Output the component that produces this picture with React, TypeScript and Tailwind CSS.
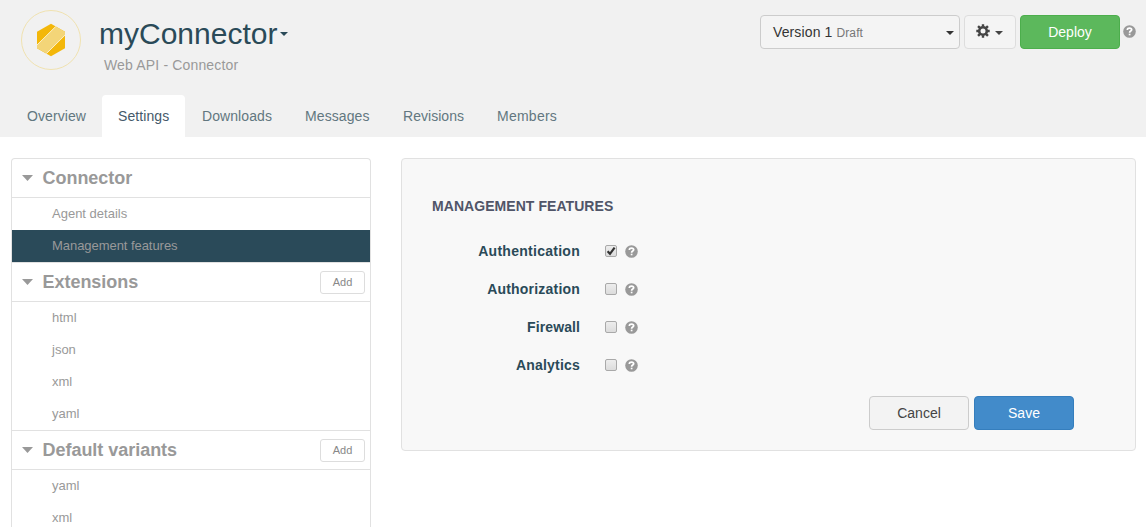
import React from "react";

function Caret({ className }: { className: string }) {
  return (
    <svg viewBox="0 0 8 4" preserveAspectRatio="none" className={className} fill="currentColor" aria-hidden="true">
      <path d="M0 0h8L4 4z" />
    </svg>
  );
}

function Help() {
  return (
    <svg viewBox="0 0 12 12" className="size-[13px] shrink-0" aria-hidden="true">
      <circle cx="6" cy="6" r="5.8" fill="#999" />
      <path d="M4 4.7C4 3.3 4.8 2.8 6 2.8s2 .65 2 1.6C8 5.6 6.1 5.6 6.1 7.1" fill="none" stroke="#fff" strokeWidth="1.6" />
      <path d="M5.3 8h1.6v1.5H5.3z" fill="#fff" />
    </svg>
  );
}

function Gear() {
  return (
    <svg viewBox="0 0 14 14" className="size-3.5" fill="none" stroke="#444" aria-hidden="true">
      <circle cx="7" cy="7" r="3.8" strokeWidth="2.6" />
      <path
        d="M7 .3v2.3M7 11.4v2.3M.3 7h2.3M11.4 7h2.3M2.05 2.05l1.8 1.8M10.15 10.15l1.8 1.8M2.05 11.95l1.8-1.8M10.15 3.85l1.8-1.8"
        strokeWidth="2.4"
      />
    </svg>
  );
}

function Logo() {
  return (
    <svg viewBox="0 0 60 60" className="size-[60px]" aria-hidden="true">
      <circle cx="30" cy="30" r="29.5" fill="none" stroke="#f0e2b0" />
      <path d="M30 13.7 44 21.8v16.4L30 46.3 16 38.2V21.8z" fill="#f3b70a" />
      <path d="M34.7 16.5 44 21.8v3.3L25.4 43.6 16 38.2V35z" fill="#f3d578" />
      <path d="M34.7 16.5 16 35M44 25.1 25.4 43.6" stroke="#fdf4d6" strokeWidth=".9" />
    </svg>
  );
}

const tabs = [
  { label: "Overview", width: "w-[91px]", spacing: "tracking-[0.08px]" },
  { label: "Settings", width: "w-[83px] mr-px", active: true, spacing: "tracking-[0.08px]" },
  { label: "Downloads", width: "w-[103px]", spacing: "tracking-[0.08px]" },
  { label: "Messages", width: "w-[98px]", spacing: "tracking-[0.1px]" },
  { label: "Revisions", width: "w-[94px]", spacing: "tracking-[0.04px]" },
  { label: "Members", width: "w-[93px]", spacing: "tracking-[0.25px]" },
];

const sections = [
  { title: "Connector", items: ["Agent details", "Management features"], add: false },
  { title: "Extensions", items: ["html", "json", "xml", "yaml"], add: true },
  { title: "Default variants", items: ["yaml", "xml"], add: true },
];

const features = [
  { label: "Authentication", checked: true, spacing: "tracking-[0.27px]" },
  { label: "Authorization", checked: false, spacing: "tracking-[0.2px]" },
  { label: "Firewall", checked: false, spacing: "tracking-[0.1px]" },
  { label: "Analytics", checked: false, spacing: "tracking-[0.2px]" },
];

function Checkbox({ checked }: { checked: boolean }) {
  return (
    <span
      role="checkbox"
      aria-checked={checked}
      className="flex size-3 items-center justify-center rounded-[2px] border border-[#a9a9a9] bg-linear-to-b from-[#ededed] to-[#dcdcdc]"
    >
      {checked && (
        <svg viewBox="0 0 10 10" className="size-2.5 shrink-0" fill="none" stroke="#333" strokeWidth="2.2" aria-hidden="true">
          <path d="M1.6 5.3 4 7.8 8.6 1.7" />
        </svg>
      )}
    </span>
  );
}

export default function App() {
  return (
    <div className="h-[527px] w-[1146px] overflow-hidden bg-white font-['Liberation_Sans',Arial,sans-serif] text-sm">
      <header className="flex h-[137px] flex-col justify-between bg-[#f1f1f1]">
        <div className="flex items-start pl-[21px] pr-[10px]">
          <div className="mt-[10px]">
            <Logo />
          </div>
          <div className="ml-[18px] mt-4">
            <h1 className="flex h-9 items-center text-[30px] leading-9 text-[#2a4a58]">
              myConnector
              <Caret className="ml-[3px] h-1 w-2" />
            </h1>
            <p className="ml-[5px] mt-[3px] leading-5 tracking-[0.16px] text-[#999]">Web API - Connector</p>
          </div>
          <div className="ml-auto mt-[15px] flex">
            <button className="flex h-[34px] w-[200px] items-center rounded border border-[#ccc] bg-[#f4f4f4] pl-3 pr-[5px] text-[#333]">
              <span className="tracking-[0.12px]">
                Version 1 <span className="text-xs text-[#777]">Draft</span>
              </span>
              <Caret className="ml-auto mt-0.5 h-1 w-2" />
            </button>
            <button className="ml-1 flex h-[34px] w-[52px] items-center rounded border border-[#ddd] bg-[#f4f4f4] pl-[11px] text-[#444]">
              <span className="-mt-0.5">
                <Gear />
              </span>
              <Caret className="ml-[5px] mt-0.5 h-1 w-2" />
            </button>
            <button className="ml-1 h-[34px] w-[100px] rounded border border-[#4cae4c] bg-[#5cb85c] text-white">Deploy</button>
            <span className="ml-[3px] mt-[9.5px]">
              <Help />
            </span>
          </div>
        </div>
        <nav className="flex pl-[11px]">
          {tabs.map((tab) => (
            <a
              key={tab.label}
              className={`h-[42px] rounded-t pl-4 leading-[42px] ${tab.width} ${tab.spacing} ${tab.active ? "bg-white text-[#45596a]" : "text-[#627780]"}`}
            >
              {tab.label}
            </a>
          ))}
        </nav>
      </header>

      <main className="flex items-start pl-[11px] pt-[21px]">
        <aside className="w-[360px] rounded-t border border-b-0 border-[#e1e1e1] text-[#999]">
          {sections.map((section, index) => (
            <section key={section.title} className={index > 0 ? "border-t border-[#e1e1e1]" : ""}>
              <div className="flex h-[39px] items-center border-b border-[#e1e1e1] pl-[10px] pr-[5px]">
                <Caret className="h-1.5 w-[11px]" />
                <h2 className="ml-[9.5px] text-lg font-bold leading-[38px] tracking-[-0.03px]">{section.title}</h2>
                {section.add && (
                  <button className="ml-auto mt-px h-[23px] w-[45px] rounded-[3px] border border-[#ddd] bg-white text-[11px] text-[#888]">
                    Add
                  </button>
                )}
              </div>
              <ul>
                {section.items.map((item) => (
                  <li
                    key={item}
                    className={`h-8 pl-10 text-[13px] leading-8 ${item === "Management features" ? "bg-[#2a4a59] tracking-[-0.05px]" : ""}`}
                  >
                    {item}
                  </li>
                ))}
              </ul>
            </section>
          ))}
        </aside>

        <section className="ml-[30px] h-[293px] w-[735px] rounded border border-[#e1e1e1] bg-[#f8f8f8] pl-[30px] pt-[37px]">
          <h3 className="font-bold leading-5 tracking-[0.06px] text-[#505568]">MANAGEMENT FEATURES</h3>
          <div className="mt-4">
            {features.map((feature) => (
              <div key={feature.label} className="flex h-[38px] items-center">
                <span className={`w-[148px] text-right font-bold text-[#2a4a58] ${feature.spacing}`}>{feature.label}</span>
                <span className="ml-[25px]">
                  <Checkbox checked={feature.checked} />
                </span>
                <span className="ml-2">
                  <Help />
                </span>
              </div>
            ))}
          </div>
          <div className="mt-[12px] flex justify-end gap-[5px] pr-[61px]">
            <button className="h-[34px] w-[100px] rounded border border-[#ccc] bg-[#f3f3f3] text-[#444]">Cancel</button>
            <button className="h-[34px] w-[100px] rounded border border-[#357ebd] bg-[#428bca] text-white">Save</button>
          </div>
        </section>
      </main>
    </div>
  );
}
